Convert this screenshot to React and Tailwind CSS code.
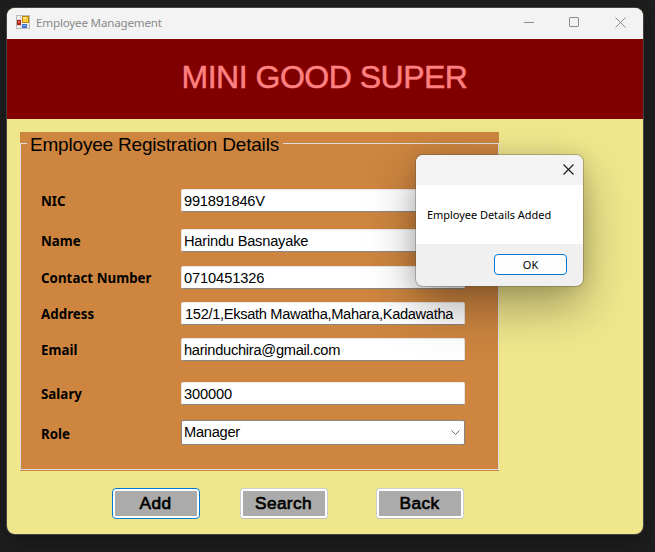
import React from "react";

const fields = [
  { label: "NIC", value: "991891846V", gap: "mt-[34px]", text: "tracking-[-0.24px]" },
  { label: "Name", value: "Harindu Basnayake", gap: "mt-[17px]", text: "tracking-[-0.22px]" },
  { label: "Contact Number", value: "0710451326", gap: "mt-[14px]", text: "tracking-[-0.12px]" },
  { label: "Address", value: "152/1,Eksath Mawatha,Mahara,Kadawatha", gap: "mt-[13px]", text: "pl-px tracking-[-0.33px]" },
  { label: "Email", value: "harinduchira@gmail.com", gap: "mt-[13px]", text: "tracking-[-0.28px]" },
  { label: "Salary", value: "300000", gap: "mt-[21px]", text: "tracking-[-0.15px]" },
];

function FormIcon() {
  return (
    <svg className="-mt-[3px] ml-[9px] h-[14px] w-[14px]" viewBox="0 0 14 14" shapeRendering="crispEdges">
      <rect width="14" height="14" fill="#b9b9b9" />
      <rect x="1" y="1" width="12" height="12" fill="#f1f1f1" />
      <path d="M4 1v12M1 4h5M1 10h12" stroke="#d5d5d5" />
      <rect x="1" y="5" width="4" height="5" fill="#a41e14" />
      <rect x="2" y="6" width="2" height="2" fill="#e26354" />
      <rect x="6" y="1" width="7" height="7" fill="#bd8505" />
      <rect x="7" y="2" width="5" height="5" fill="#f8cd39" />
      <rect x="7" y="2" width="3" height="2" fill="#ffe68b" />
      <rect x="6" y="9" width="5" height="4" fill="#3e73d2" />
      <rect x="7" y="10" width="3" height="1" fill="#8db5f5" />
    </svg>
  );
}

function TitleBar() {
  return (
    <div className="flex h-[31px] items-center bg-[#f3f3f3]">
      <FormIcon />
      <span className="-mt-px ml-[6px] font-['Noto_Sans',sans-serif] text-[11.6px] leading-4 tracking-[-0.18px] text-[#8a8a8a]">
        Employee Management
      </span>
      <svg className="-mt-[2px] ml-auto mr-[16px] h-[11px] w-[103px]" viewBox="0 0 103 11" fill="none" stroke="#8c8c8c">
        <path d="M0 5.5h10" />
        <rect x="45.5" y=".5" width="9" height="9" rx=".6" />
        <path d="M91.5.5l10 10M101.5.5l-10 10" />
      </svg>
    </div>
  );
}

function Label({ children }) {
  return (
    <span className="block w-[140px] whitespace-nowrap pt-px font-['Noto_Sans',sans-serif] text-[13.3px] font-bold leading-[23px] tracking-[0.04px]">
      {children}
    </span>
  );
}

function Registration() {
  return (
    <fieldset className="flex h-[339px] w-[479px] flex-col bg-[#cd853f] pb-px">
      <div className="flex h-[23px] items-start">
        <div className="mt-[11px] h-[12px] w-[7px] border-l border-t border-[#dcdcdc]" />
        <div className="w-[256px] whitespace-nowrap pl-[3px] pt-px text-[19px] leading-[24px] tracking-[-0.19px]">
          Employee Registration Details
        </div>
        <div className="mt-[11px] h-[12px] flex-1 border-r border-t border-[#dcdcdc]" />
      </div>
      <div className="flex flex-1 flex-col border-x border-b border-[#dcdcdc] pl-5">
        {fields.map((f) => (
          <div key={f.label} className={`flex h-[23px] ${f.gap}`}>
            <Label>{f.label}</Label>
            <div className="h-[23px] w-[284px] rounded-[2px] border border-b-[#868686] border-l-[#e2e2e2] border-r-[#e2e2e2] border-t-[#e8e8e8] bg-white pl-[2px]">
              <span className={`block whitespace-nowrap text-[14.67px] leading-[22px] ${f.text}`}>{f.value}</span>
            </div>
          </div>
        ))}
        <div className="mt-[15px] flex h-[25px]">
          <div className="w-[140px] pt-[2px]"><Label>Role</Label></div>
          <div className="flex h-[25px] w-[284px] items-center justify-between rounded-[2px] border border-[#868686] bg-white pl-[2px] pr-[4px]">
            <span className="-mt-px text-[14.67px] leading-[22px] tracking-[-0.28px]">Manager</span>
            <svg className="h-[5px] w-[9px]" viewBox="0 0 9 5" fill="none" stroke="#666">
              <path d="M.5.5l4 4 4-4" />
            </svg>
          </div>
        </div>
      </div>
    </fieldset>
  );
}

function ActionButton({ children, active }) {
  return (
    <button
      className={`h-[31px] w-[88px] rounded-[4px] border bg-white p-[2px] ${
        active ? "border-[#0078d4]" : "border-[#cfcfcf] border-b-[#bdbdbd]"
      }`}
    >
      <span className="block h-[25px] bg-[#ababab] pr-px text-[17.3px] leading-[25px] tracking-[0.35px] [-webkit-text-stroke:0.65px_#000]">
        {children}
      </span>
    </button>
  );
}

function MessageBox() {
  return (
    <div className="absolute left-[416px] top-[155px] flex h-[131px] w-[167px] flex-col rounded-[7px] bg-[#f0f0f0] shadow-[0_0_0_1px_rgba(90,80,60,0.35),0_20px_48px_rgba(0,0,0,0.34),0_1px_18px_rgba(0,0,0,0.12)]">
      <div className="flex h-[30px] items-center justify-end rounded-t-[7px] bg-[#f3f3f3] pb-[2px] pr-[9px]">
        <svg className="h-[11px] w-[11px]" viewBox="0 0 11 11" fill="none" stroke="#1a1a1a" strokeWidth="1.1">
          <path d="M.5.5l10 10M10.5.5l-10 10" />
        </svg>
      </div>
      <div className="flex h-[59px] items-center whitespace-nowrap bg-white pl-[11px] font-['Noto_Sans',sans-serif] text-[11px] leading-4 tracking-[-0.04px]">
        Employee Details Added
      </div>
      <div className="flex flex-1 items-start justify-end pr-4 pt-[10px]">
        <button className="h-[21px] w-[73px] rounded-[4px] border border-[#0078d4] bg-[#fdfdfd] font-['Noto_Sans',sans-serif] text-[11px] leading-[19px]">
          OK
        </button>
      </div>
    </div>
  );
}

export default function App() {
  return (
    <div className="relative h-[552px] w-[655px] overflow-hidden bg-[#1e1e1e] pl-[7px] pt-[8px] font-['Liberation_Sans',Arial,sans-serif] text-black">
      <div className="flex h-[526px] w-[636px] flex-col overflow-hidden rounded-[8px] bg-[#f0e68c] shadow-[0_0_0_1px_#444,0_8px_18px_rgba(0,0,0,0.3)]">
        <TitleBar />
        <h1 className="flex h-[80px] items-center justify-center whitespace-nowrap bg-[#800000] pb-[5px] pr-px text-[32px] leading-9 tracking-[-0.5px] text-[#ff8080] [-webkit-text-stroke:0.5px_#ff8080]">
          MINI GOOD SUPER
        </h1>
        <div className="px-[13px] pt-[13px]">
          <Registration />
          <div className="ml-[92px] mt-[17px] flex gap-10">
            <ActionButton active>Add</ActionButton>
            <ActionButton>Search</ActionButton>
            <div className="pl-2"><ActionButton>Back</ActionButton></div>
          </div>
        </div>
      </div>
      <MessageBox />
    </div>
  );
}
